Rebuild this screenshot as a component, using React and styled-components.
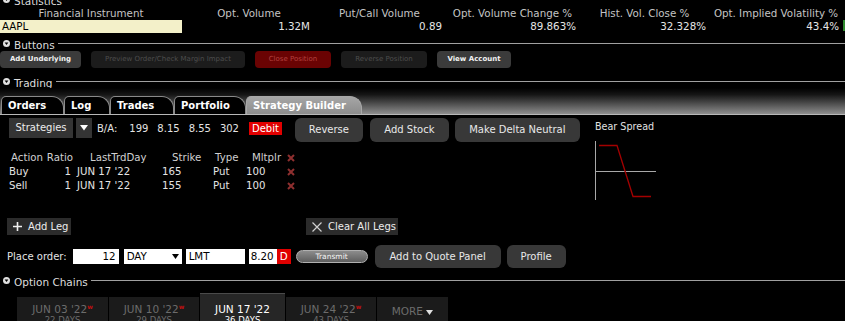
import React from 'react';
import styled, { createGlobalStyle } from 'styled-components';

const GlobalStyle = createGlobalStyle`
  html, body { margin: 0; padding: 0; background: #000; }
  body { overflow: hidden; font-family: "DejaVu Sans", Verdana, sans-serif; }
`;

const Page = styled.div`
  width: 845px;
  height: 321px;
  overflow: hidden;
  background: #000;
  color: #ddd;
  font-size: 10px;
`;

const Stack = styled.div`
  display: flex;
  flex-direction: column;
  margin-top: -7px;
`;

/* section headers */
const Section = styled.div`
  display: flex;
  align-items: center;
  height: 12px;
  margin-top: ${p => p.$mt || 0}px;
  padding-left: 3px;
`;

const SectionLabel = styled.span`
  font-size: 10.5px;
  line-height: 12px;
  padding-top: 3px;
  margin-left: 4px;
  color: #ddd;
  white-space: nowrap;
`;

const SectionRule = styled.div`
  flex: 1;
  height: 1px;
  margin-left: 3px;
  background: #a0a0a0;
`;

const Collapse = () => (
  <svg width="7" height="7" viewBox="0 0 7 7">
    <circle cx="3.5" cy="3.5" r="3.5" fill="#e0e0e0" />
    <path d="M1.6 2.4 H5.4 L3.5 5 Z" fill="#000" />
  </svg>
);

const SectionHeader = ({ label, mt }) => (
  <Section $mt={mt}>
    <Collapse />
    <SectionLabel>{label}</SectionLabel>
    <SectionRule />
  </Section>
);

/* statistics */
const StatGrid = styled.div`
  display: grid;
  grid-template-columns: 182px 129px 132px 134px 130px 133px 1fr;
  margin-top: ${p => p.$mt || 0}px;
  height: 13px;
  font-size: 10.3px;
  line-height: 13px;
`;

const StatHead = styled.div`
  text-align: center;
  padding-left: ${p => (p.$first ? 0 : 5)}px;
  color: #c4c4c4;
  white-space: nowrap;
`;

const StatValue = styled.div`
  text-align: right;
  color: #e6e6e6;
  padding-right: 1px;
  white-space: nowrap;
`;

const SymbolField = styled.div`
  background: #f3f0c9;
  color: #000;
  padding-left: 2px;
`;

const GreenMark = styled.div`
  justify-self: end;
  width: 2px;
  height: 11px;
  background: #2f8a2f;
`;

/* buttons row */
const ButtonRow = styled.div`
  display: flex;
  gap: 10px;
  height: 17px;
  margin-top: 2px;
`;

const SmallButton = styled.div`
  width: ${p => p.$w}px;
  border-radius: 4px;
  font-size: 7px;
  line-height: 17px;
  text-align: center;
  white-space: nowrap;
  background: ${p => (p.$kind === 'off' ? '#1c1c1c' : p.$kind === 'danger' ? '#6a0303' : '#3b3b3b')};
  color: ${p => (p.$kind === 'off' ? '#4d4d4d' : p.$kind === 'danger' ? '#b4413f' : '#f2f2f2')};
  font-weight: ${p => (p.$kind ? 'normal' : 'bold')};
`;

/* tabs */
const TabBar = styled.div`
  display: flex;
  align-items: flex-end;
  height: 26px;
  margin-top: 1px;
  padding-left: 1px;
  background: linear-gradient(to bottom, #000 0%, #151515 25%, #8e8e8e 100%);
  border-bottom: 1px solid #b8b8b8;
`;

const Tab = styled.div`
  box-sizing: border-box;
  width: ${p => p.$w}px;
  height: 18px;
  padding-left: 6px;
  border: 1px solid ${p => (p.$active ? '#a8a8a8' : '#8a8a8a')};
  border-bottom: none;
  border-radius: 5px 12px 0 0;
  background: ${p => (p.$active ? 'linear-gradient(#a6a6a6, #8c8c8c)' : '#000')};
  color: #fff;
  font-weight: bold;
  font-size: 10px;
  line-height: 17px;
  white-space: nowrap;
`;

/* strategy builder */
const Builder = styled.div`
  display: flex;
`;

const LeftPane = styled.div`
  width: 594px;
  display: flex;
  flex-direction: column;
`;

const RightPane = styled.div`
  display: flex;
  flex-direction: column;
  padding-left: 1px;
`;

const StrategyRow = styled.div`
  display: flex;
  align-items: flex-start;
  margin-top: 3px;
  padding-left: 9px;
  height: 24px;
`;

const Quote = styled.div`
  display: flex;
  align-items: center;
  height: 20px;
`;

const GreyBox = styled.div`
  background: #343434;
  color: #ececec;
  height: 20px;
  line-height: 20px;
  text-align: center;
  width: ${p => p.$w}px;
  margin-left: ${p => p.$ml || 0}px;
  display: flex;
  align-items: center;
  justify-content: center;
`;

const QuoteText = styled.span`
  color: #e4e4e4;
  margin-left: ${p => p.$ml || 0}px;
  white-space: nowrap;
`;

const Debit = styled.span`
  background: #e10000;
  color: #fff;
  height: 13px;
  line-height: 13px;
  padding: 0 3px;
  margin-left: 10px;
`;

const Button = styled.div`
  width: ${p => p.$w}px;
  height: ${p => p.$h || 24}px;
  margin-left: ${p => p.$ml || 0}px;
  border-radius: 6px;
  background: #383838;
  color: #e8e8e8;
  font-size: 10px;
  line-height: ${p => p.$h || 24}px;
  text-align: center;
  white-space: nowrap;
`;

const Table = styled.div`
  margin-top: 9px;
  padding-left: 9px;
  display: flex;
  flex-direction: column;
`;

const TRow = styled.div`
  display: flex;
  height: 14px;
  line-height: 14px;
  font-size: 10.2px;
  color: ${p => (p.$head ? '#d0d0d0' : '#e4e4e4')};
`;

const Cell = styled.div`
  box-sizing: border-box;
  width: ${p => p.$w}px;
  padding-left: ${p => p.$pl || 0}px;
  padding-right: ${p => p.$pr || 0}px;
  white-space: nowrap;
  display: flex;
  align-items: center;
  justify-content: ${p => (p.$right ? 'flex-end' : 'flex-start')};
`;

const Remove = () => (
  <svg width="8" height="8" viewBox="0 0 8 8">
    <path d="M1 1 L7 7 M7 1 L1 7" stroke="#8e2f2f" strokeWidth="2" />
  </svg>
);

const LegRow = styled.div`
  display: flex;
  margin-top: 25px;
  padding-left: 7px;
  height: 17px;
`;

const LegButton = styled.div`
  width: ${p => p.$w}px;
  margin-left: ${p => p.$ml || 0}px;
  background: #2b2b2b;
  color: #ececec;
  display: flex;
  align-items: center;
  gap: 6px;
  padding-left: 6px;
  box-sizing: border-box;
  font-size: 10px;
  white-space: nowrap;
`;

const OrderRow = styled.div`
  display: flex;
  align-items: center;
  margin-top: 10px;
  padding-left: 7px;
  height: 23px;
`;

const Field = styled.div`
  box-sizing: border-box;
  width: ${p => p.$w}px;
  height: 15px;
  margin-left: ${p => p.$ml || 0}px;
  background: ${p => (p.$red ? '#e00000' : '#fff')};
  color: ${p => (p.$red ? '#fff' : '#000')};
  font-size: 10.3px;
  line-height: 15px;
  padding: 0 3px;
  display: flex;
  align-items: center;
  justify-content: ${p => (p.$align === 'right' ? 'flex-end' : p.$align === 'center' ? 'center' : 'space-between')};
`;

const Transmit = styled.div`
  box-sizing: border-box;
  width: 72px;
  height: 13px;
  margin-left: 5px;
  border: 1px solid #b0b0b0;
  border-radius: 7px;
  background: linear-gradient(#8c8c8c, #5e5e5e);
  color: #f4f4f4;
  font-size: 7.5px;
  line-height: 11px;
  text-align: center;
`;

const ChartLabel = styled.div`
  margin-top: 6px;
  font-size: 9.6px;
  line-height: 12px;
  color: #e2e2e2;
`;

const Chart = styled.svg`
  margin-top: 8px;
`;

/* option chains */
const ExpiryRow = styled.div`
  display: flex;
  align-items: flex-start;
  gap: 1px;
  margin-top: 7px;
  padding-left: 17px;
`;

const Expiry = styled.div`
  width: ${p => p.$w}px;
  height: 40px;
  margin-top: ${p => (p.$active ? 0 : 4)}px;
  padding-top: ${p => (p.$active ? 9 : p.$more ? 7 : 5)}px;
  box-sizing: border-box;
  background: ${p => (p.$active ? '#262626' : '#1b1b1b')};
  border-top: 1px solid ${p => (p.$active ? '#4a4a4a' : '#1b1b1b')};
  color: ${p => (p.$active ? '#fff' : '#6c6c6c')};
  text-align: center;
  font-size: 10.5px;
  line-height: 12px;
  white-space: nowrap;
`;

const Days = styled.div`
  font-size: 8.5px;
  line-height: 11px;
`;

const Weekly = styled.sup`
  color: #c21010;
  font-size: 6px;
  font-weight: bold;
  vertical-align: 4px;
  line-height: 0;
`;

const Caret = ({ color = '#fff', w = 8 }) => (
  <svg width={w} height={w * 0.7} viewBox="0 0 8 5.6">
    <path d="M0 0 H8 L4 5.6 Z" fill={color} />
  </svg>
);

const stats = [
  ['Opt. Volume', '1.32M'],
  ['Put/Call Volume', '0.89'],
  ['Opt. Volume Change %', '89.863%'],
  ['Hist. Vol. Close %', '32.328%'],
  ['Opt. Implied Volatility %', '43.4%'],
];

const tabs = [
  ['Orders', 63],
  ['Log', 46],
  ['Trades', 64],
  ['Portfolio', 72],
  ['Strategy Builder', 116, true],
];

const cols = [
  { w: 37, h: { pl: 2 }, v: { pl: 0 } },
  { w: 28, h: { right: true, pr: 1 }, v: { right: true, pr: 3 } },
  { w: 76, h: { pl: 16 }, v: { pl: 3 } },
  { w: 56, h: { pl: 22 }, v: { pl: 12 } },
  { w: 40, h: { pl: 9 }, v: { pl: 7 } },
  { w: 40, h: { pl: 6 }, v: { pl: 0 } },
  { w: 14, h: { pl: 1 }, v: { pl: 1 } },
];

const header = ['Action', 'Ratio', 'LastTrdDay', 'Strike', 'Type', 'Mltplr', <Remove key="x" />];
const legs = [
  ['Buy', '1', "JUN 17 '22", '165', 'Put', '100', <Remove key="x" />],
  ['Sell', '1', "JUN 17 '22", '155', 'Put', '100', <Remove key="x" />],
];

const expiries = [
  { d: "JUN 03 '22", n: '22 DAYS', w: 91, wk: true },
  { d: "JUN 10 '22", n: '29 DAYS', w: 90, wk: true },
  { d: "JUN 17 '22", n: '36 DAYS', w: 85, active: true },
  { d: "JUN 24 '22", n: '43 DAYS', w: 90, wk: true },
];

const App = () => (
  <Page>
    <GlobalStyle />
    <Stack>
      <SectionHeader label="Statistics" />
      <StatGrid $mt={2}>
        <StatHead $first>Financial Instrument</StatHead>
        {stats.map(([h]) => <StatHead key={h}>{h}</StatHead>)}
        <div />
      </StatGrid>
      <StatGrid>
        <SymbolField>AAPL</SymbolField>
        {stats.map(([h, v]) => <StatValue key={h}>{v}</StatValue>)}
        <GreenMark />
      </StatGrid>

      <SectionHeader label="Buttons" mt={4} />
      <ButtonRow>
        <SmallButton $w={81}>Add Underlying</SmallButton>
        <SmallButton $w={154} $kind="off">Preview Order/Check Margin Impact</SmallButton>
        <SmallButton $w={76} $kind="danger">Close Position</SmallButton>
        <SmallButton $w={86} $kind="off">Reverse Position</SmallButton>
        <SmallButton $w={74}>View Account</SmallButton>
      </ButtonRow>

      <SectionHeader label="Trading" mt={7} />
      <TabBar>
        {tabs.map(([t, w, a]) => (
          <Tab key={t} $w={w} $active={a}>{t}</Tab>
        ))}
      </TabBar>

      <Builder>
        <LeftPane>
          <StrategyRow>
            <Quote>
              <GreyBox $w={64}>Strategies</GreyBox>
              <GreyBox $w={16} $ml={3}><Caret w={8} /></GreyBox>
              <QuoteText $ml={5}>B/A:</QuoteText>
              <QuoteText $ml={12}>199</QuoteText>
              <QuoteText $ml={9}>8.15</QuoteText>
              <QuoteText $ml={9}>8.55</QuoteText>
              <QuoteText $ml={9}>302</QuoteText>
              <Debit>Debit</Debit>
            </Quote>
            <Button $w={68} $ml={13}>Reverse</Button>
            <Button $w={79} $ml={7}>Add Stock</Button>
            <Button $w={125} $ml={6}>Make Delta Neutral</Button>
          </StrategyRow>

          <Table>
            <TRow $head>
              {header.map((h, i) => (
                <Cell key={i} $w={cols[i].w} $pl={cols[i].h.pl} $pr={cols[i].h.pr} $right={cols[i].h.right}>{h}</Cell>
              ))}
            </TRow>
            {legs.map((row, r) => (
              <TRow key={r}>
                {row.map((v, i) => (
                  <Cell key={i} $w={cols[i].w} $pl={cols[i].v.pl} $pr={cols[i].v.pr} $right={cols[i].v.right}>{v}</Cell>
                ))}
              </TRow>
            ))}
          </Table>

          <LegRow>
            <LegButton $w={64}>
              <svg width="9" height="9" viewBox="0 0 9 9">
                <path d="M4.5 0 V9 M0 4.5 H9" stroke="#f0f0f0" strokeWidth="1.6" />
              </svg>
              Add Leg
            </LegButton>
            <LegButton $w={92} $ml={235}>
              <svg width="10" height="10" viewBox="0 0 10 10">
                <path d="M0.5 0.5 L9.5 9.5 M9.5 0.5 L0.5 9.5" stroke="#cfcfcf" strokeWidth="1.2" />
              </svg>
              Clear All Legs
            </LegButton>
          </LegRow>

          <OrderRow>
            <QuoteText>Place order:</QuoteText>
            <Field $w={46} $ml={6} $align="right">12</Field>
            <Field $w={58} $ml={5}>DAY<Caret color="#000" w={7} /></Field>
            <Field $w={59} $ml={4}>LMT</Field>
            <Field $w={28} $ml={4} $align="right">8.20</Field>
            <Field $w={14} $red $align="center">D</Field>
            <Transmit>Transmit</Transmit>
            <Button $w={126} $h={23} $ml={7}>Add to Quote Panel</Button>
            <Button $w={59} $h={23} $ml={6}>Profile</Button>
          </OrderRow>
        </LeftPane>

        <RightPane>
          <ChartLabel>Bear Spread</ChartLabel>
          <Chart width="62" height="60" viewBox="0 0 62 60">
            <path d="M0.5 0 V59" stroke="#a8a8a8" strokeWidth="1" />
            <path d="M0 30.5 H61" stroke="#a8a8a8" strokeWidth="1" />
            <polyline points="4,4.5 22,4.5 38,55.5 56,55.5" fill="none" stroke="#a30000" strokeWidth="1.3" />
          </Chart>
        </RightPane>
      </Builder>

      <SectionHeader label="Option Chains" mt={6} />
      <ExpiryRow>
        {expiries.map(e => (
          <Expiry key={e.d} $w={e.w} $active={e.active}>
            {e.d}{e.wk && <Weekly>w</Weekly>}
            <Days>{e.n}</Days>
          </Expiry>
        ))}
        <Expiry $w={71} $more>
          MORE <Caret color="#e0e0e0" w={7} />
        </Expiry>
      </ExpiryRow>
    </Stack>
  </Page>
);

export default App;
